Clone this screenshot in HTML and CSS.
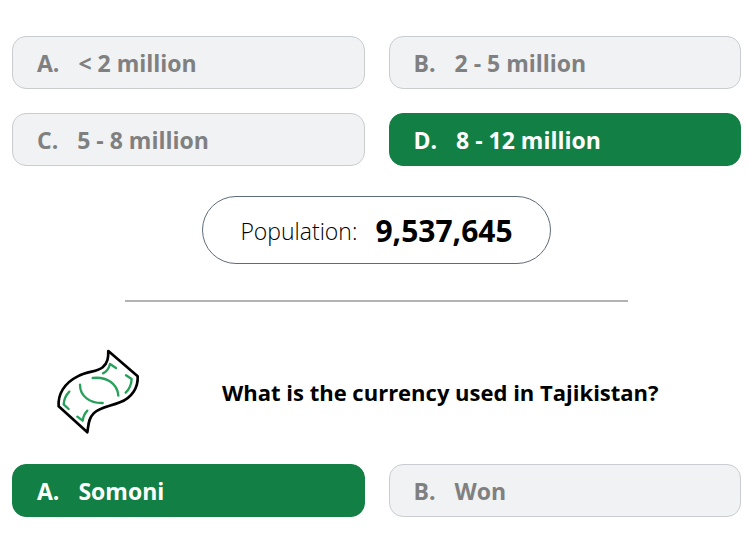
FILE: index.html
```html
<!DOCTYPE html>
<html lang="en">
<head>
    <meta charset="UTF-8">
    <meta name="viewport" content="width=device-width, initial-scale=1.0">
    <title>Country Quiz</title>
    <link rel="stylesheet" href="styles.css">
</head>
<body>
    <main>
        <section>
            <div class="options">
                <button type="button" class="option"><span>A.</span><span>&lt; 2 million</span></button>
                <button type="button" class="option"><span>B.</span><span>2 - 5 million</span></button>
                <button type="button" class="option"><span>C.</span><span>5 - 8 million</span></button>
                <button type="button" class="option correct"><span>D.</span><span>8 - 12 million</span></button>
            </div>
            <p class="fact">Population: <strong>9,537,645</strong></p>
        </section>
        <hr>
        <section>
            <div class="question">
                <svg class="question-icon" viewBox="48 42 252 258" fill="none" stroke-linecap="round" stroke-linejoin="round" aria-hidden="true">
                    <!-- banknote outline -->
                    <path stroke="#000" stroke-width="8" d="M205 48 L293 124 C295 157 276 188 240 202 C208 215 180 216 161 235 C144 252 146 270 142 292 L56 214 C53 178 73 144 113 124 C145 107 170 112 188 97 C204 82 205 68 205 48 Z"/>
                    <!-- print on the note -->
                    <g stroke="#26a05a" stroke-width="7">
                        <path d="M158 129 C198 124 232 145 235 182"/>
                        <path d="M120 149 C120 184 150 205 188 204"/>
                        <path d="M189 115 C201 110 206 102 210 87 L228 99"/>
                        <path d="M258 121 L275 132 C274 149 269 162 257 173"/>
                        <path d="M88 170 C77 181 72 193 71 208 L86 222"/>
                        <path d="M112 245 L128 257 C130 243 134 235 142 227"/>
                    </g>
                </svg>
                <h2>What is the currency used in Tajikistan?</h2>
            </div>
            <div class="options">
                <button type="button" class="option correct"><span>A.</span><span>Somoni</span></button>
                <button type="button" class="option"><span>B.</span><span>Won</span></button>
            </div>
        </section>
    </main>
</body>
</html>
```
FILE: styles.css
```css
* {
    box-sizing: border-box;
}

body {
    font-family: "Open Sans", "Noto Sans", sans-serif;
    margin: 0;
    background-color: #fff;
    color: #000;
}

main {
    padding: 36px 9px 19px 12px;
}

.options {
    display: grid;
    grid-template-columns: 1fr 1fr;
    gap: 24px;
}

.option {
    display: flex;
    align-items: center;
    gap: 19px;
    padding: 10px 24px 8px;
    border: 1px solid #c9cdd1;
    border-radius: 14px;
    background-color: #f0f2f4;
    color: #808080;
    font-family: inherit;
    font-size: 23px;
    font-weight: 700;
    line-height: 33px;
    text-align: left;
    cursor: pointer;
}

.option.correct {
    border-color: #128044;
    background-color: #128044;
    color: #fff;
}

.fact {
    display: flex;
    align-items: center;
    justify-content: center;
    gap: 18px;
    width: fit-content;
    margin: 30px auto 36px;
    padding: 14px 37px 12px;
    border: 1px solid #5f6b7a;
    border-radius: 34px;
    font-size: 23px;
    font-weight: 300;
    line-height: 40px;
}

.fact strong {
    font-size: 30px;
    font-weight: 700;
}

hr {
    width: 69%;
    margin: 0 auto 47px;
    border: none;
    border-top: 2px solid #b3b3b3;
}

.question {
    display: flex;
    align-items: center;
    gap: 82px;
    margin-bottom: 29px;
    padding-left: 44px;
}

.question-icon {
    flex: none;
    width: 84px;
    height: 86px;
}

.question h2 {
    margin: 0;
    font-size: 22px;
    font-weight: 700;
    line-height: 33px;
}
```
